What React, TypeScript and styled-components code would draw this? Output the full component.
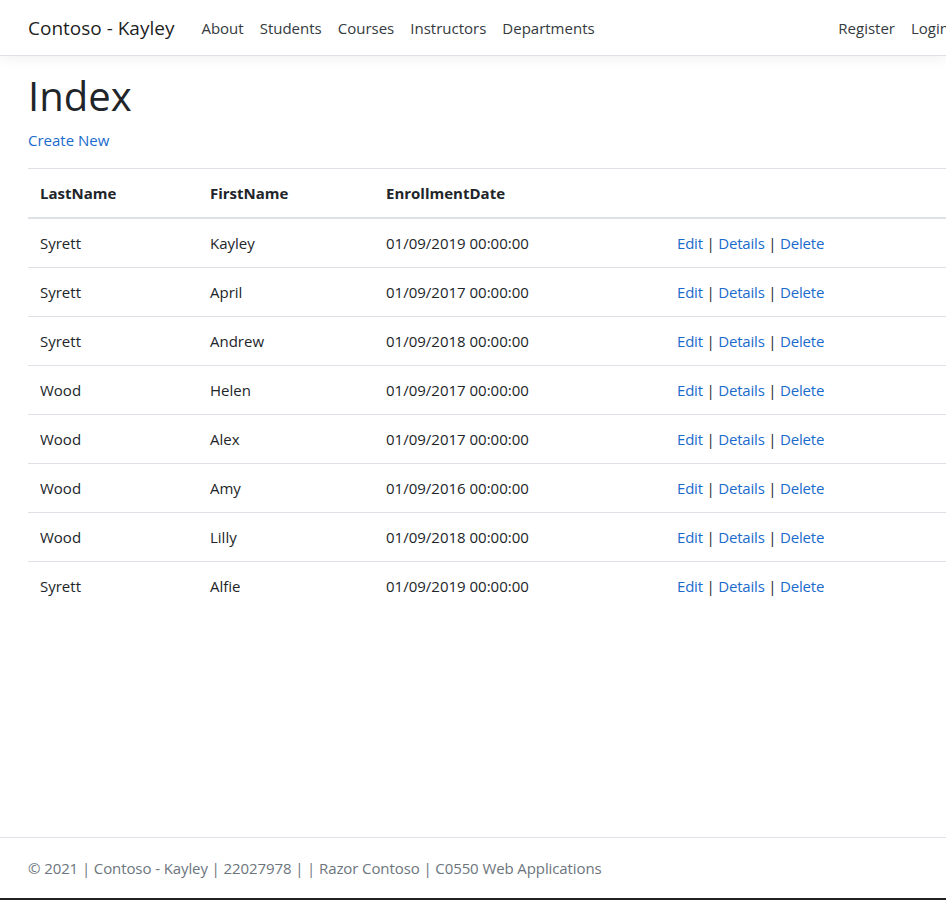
import React from "react";
import styled, { createGlobalStyle } from "styled-components";

const GlobalStyle = createGlobalStyle`
  html, body { margin: 0; padding: 0; }
  body {
    font-family: "Open Sans", "Noto Sans", sans-serif;
    font-size: 15px;
    line-height: 24px;
    color: #212529;
    background: #fff;
    overflow: hidden;
  }
  * { box-sizing: border-box; }
`;

const Page = styled.div`
  min-height: 900px;
  width: 946px;
  display: flex;
  flex-direction: column;
  border-bottom: 2px solid #222;
  overflow: hidden;
`;

const NavBar = styled.header`
  height: 56px;
  display: flex;
  align-items: center;
  padding: 0 0 0 28px;
  border-bottom: 1px solid #dee2e6;
  box-shadow: 0 4px 12px rgba(0, 0, 0, 0.05);
  margin-bottom: 16px;
  white-space: nowrap;
`;

const Brand = styled.a`
  font-size: 19px;
  color: rgba(0, 0, 0, 0.9);
  text-decoration: none;
  margin-right: 19px;
  line-height: 28px;
`;

const NavList = styled.nav<{ $right?: boolean }>`
  display: flex;
  margin-left: ${(p) => (p.$right ? "auto" : "0")};
  margin-right: ${(p) => (p.$right ? "-11px" : "0")};
`;

const NavLink = styled.a`
  color: #343a40;
  text-decoration: none;
  padding: 8px;
  font-size: 15px;
  line-height: 22px;
`;

const Main = styled.main`
  flex: 1;
  padding: 0 0 0 28px;
`;

const Title = styled.h1`
  font-size: 40px;
  font-weight: 500;
  line-height: 48px;
  margin: 0 0 8px;
`;

const Para = styled.p`
  margin: 0 0 16px;
`;

const Link = styled.a`
  color: #1a6bcc;
  text-decoration: none;
`;

const Table = styled.table`
  width: 1100px;
  border-collapse: collapse;
  table-layout: fixed;
`;

const Col = styled.col<{ $w: number }>`
  width: ${(p) => p.$w}px;
`;

const Th = styled.th`
  text-align: left;
  font-weight: 700;
  padding: 12px;
  border-top: 1px solid #dee2e6;
  border-bottom: 2px solid #dee2e6;
  vertical-align: bottom;
`;

const Td = styled.td`
  padding: 12px;
  border-top: 1px solid #dee2e6;
  vertical-align: top;
  white-space: nowrap;
`;

const Actions = styled.span`
  letter-spacing: -0.2px;
`;

const Footer = styled.footer`
  border-top: 1px solid #dee2e6;
  line-height: 60px;
  padding-left: 28px;
  color: #6c757d;
  white-space: nowrap;
  letter-spacing: -0.1px;
`;

const rows = [
  ["Syrett", "Kayley", "01/09/2019 00:00:00"],
  ["Syrett", "April", "01/09/2017 00:00:00"],
  ["Syrett", "Andrew", "01/09/2018 00:00:00"],
  ["Wood", "Helen", "01/09/2017 00:00:00"],
  ["Wood", "Alex", "01/09/2017 00:00:00"],
  ["Wood", "Amy", "01/09/2016 00:00:00"],
  ["Wood", "Lilly", "01/09/2018 00:00:00"],
  ["Syrett", "Alfie", "01/09/2019 00:00:00"],
];

export default function App() {
  return (
    <>
      <GlobalStyle />
      <Page>
        <NavBar>
          <Brand href="#">Contoso - Kayley</Brand>
          <NavList>
            <NavLink href="#">About</NavLink>
            <NavLink href="#">Students</NavLink>
            <NavLink href="#">Courses</NavLink>
            <NavLink href="#">Instructors</NavLink>
            <NavLink href="#">Departments</NavLink>
          </NavList>
          <NavList $right>
            <NavLink href="#">Register</NavLink>
            <NavLink href="#">Login</NavLink>
          </NavList>
        </NavBar>
        <Main>
          <Title>Index</Title>
          <Para>
            <Link href="#">Create New</Link>
          </Para>
          <Table>
            <colgroup>
              <Col $w={170} />
              <Col $w={176} />
              <Col $w={291} />
              <Col $w={463} />
            </colgroup>
            <thead>
              <tr>
                <Th>LastName</Th>
                <Th>FirstName</Th>
                <Th>EnrollmentDate</Th>
                <Th></Th>
              </tr>
            </thead>
            <tbody>
              {rows.map((r, i) => (
                <tr key={i}>
                  <Td>{r[0]}</Td>
                  <Td>{r[1]}</Td>
                  <Td>{r[2]}</Td>
                  <Td>
                    <Actions>
                      <Link href="#">Edit</Link> | <Link href="#">Details</Link> |{" "}
                      <Link href="#">Delete</Link>
                    </Actions>
                  </Td>
                </tr>
              ))}
            </tbody>
          </Table>
        </Main>
        <Footer>
          © 2021 | Contoso - Kayley | 22027978 | | Razor Contoso | C0550 Web Applications
        </Footer>
      </Page>
    </>
  );
}
